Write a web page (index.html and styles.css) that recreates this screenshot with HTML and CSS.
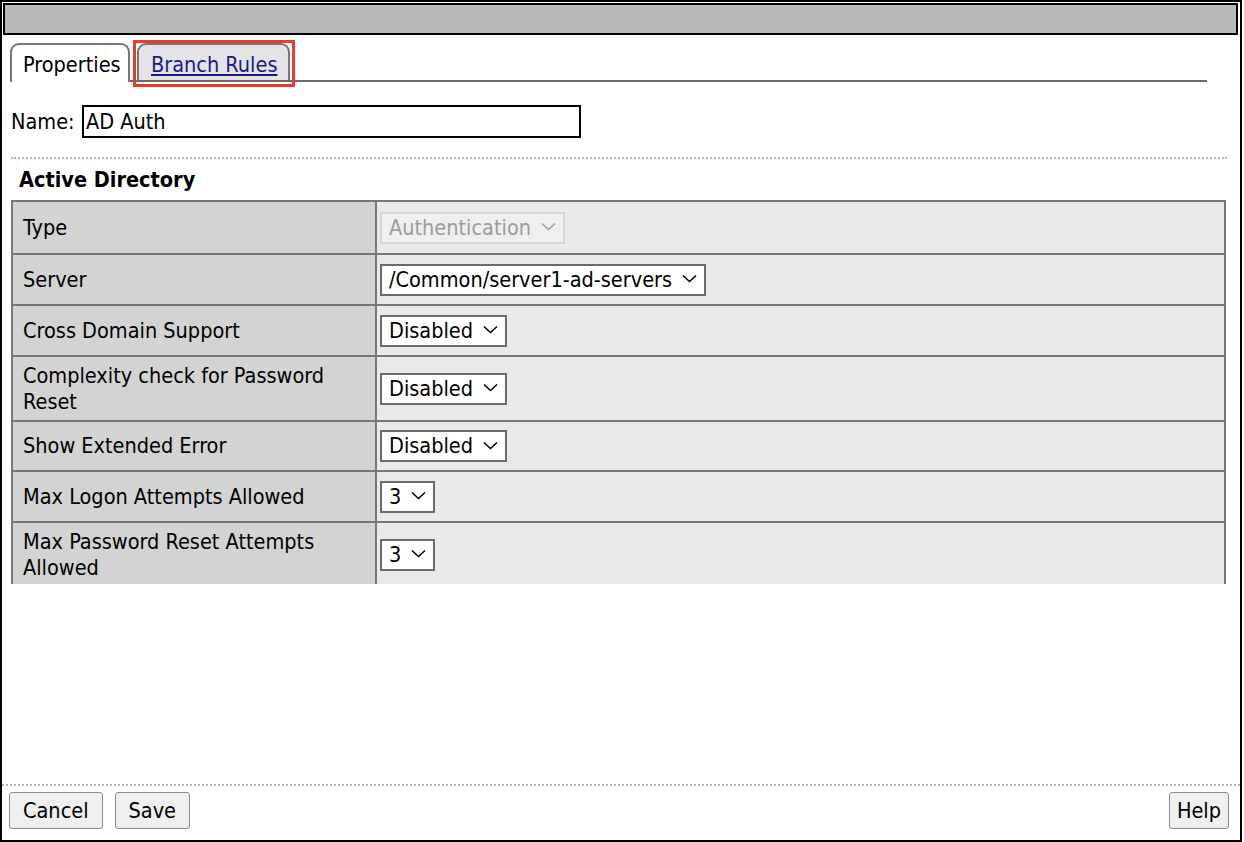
FILE: index.html
```html
<!DOCTYPE html>
<html>
<head>
<meta charset="utf-8">
<link rel="stylesheet" href="styles.css">
</head>
<body>
<div class="window">
  <div class="titlebar"></div>
  <div class="content">
    <div class="tabs">
      <div class="tab active">Properties</div>
      <div class="tab-wrap">
        <div class="tab inactive"><a href="#" class="tab-link">Branch Rules</a></div>
        <div class="highlight"></div>
      </div>
    </div>
    <div class="name-row">
      <span class="name-label">Name:</span>
      <div class="name-input">AD Auth</div>
    </div>
    <div class="dotted"></div>
    <div class="section-title">Active Directory</div>
    <table class="props">
      <tr class="r53">
        <td class="lbl">Type</td>
        <td class="val"><div class="sel disabled">Authentication<svg class="chev" width="15" height="9" viewBox="0 0 15 9"><path d="M1 1.5 L7.5 7.5 L14 1.5" fill="none" stroke="currentColor" stroke-width="1.5"/></svg></div></td>
      </tr>
      <tr class="r51">
        <td class="lbl">Server</td>
        <td class="val"><div class="sel">/Common/server1-ad-servers<svg class="chev" width="15" height="9" viewBox="0 0 15 9"><path d="M1 1.5 L7.5 7.5 L14 1.5" fill="none" stroke="currentColor" stroke-width="1.5"/></svg></div></td>
      </tr>
      <tr class="r51">
        <td class="lbl">Cross Domain Support</td>
        <td class="val"><div class="sel">Disabled<svg class="chev" width="15" height="9" viewBox="0 0 15 9"><path d="M1 1.5 L7.5 7.5 L14 1.5" fill="none" stroke="currentColor" stroke-width="1.5"/></svg></div></td>
      </tr>
      <tr class="r65">
        <td class="lbl">Complexity check for Password Reset</td>
        <td class="val"><div class="sel">Disabled<svg class="chev" width="15" height="9" viewBox="0 0 15 9"><path d="M1 1.5 L7.5 7.5 L14 1.5" fill="none" stroke="currentColor" stroke-width="1.5"/></svg></div></td>
      </tr>
      <tr class="r50">
        <td class="lbl">Show Extended Error</td>
        <td class="val"><div class="sel">Disabled<svg class="chev" width="15" height="9" viewBox="0 0 15 9"><path d="M1 1.5 L7.5 7.5 L14 1.5" fill="none" stroke="currentColor" stroke-width="1.5"/></svg></div></td>
      </tr>
      <tr class="r51">
        <td class="lbl">Max Logon Attempts Allowed</td>
        <td class="val"><div class="sel">3<svg class="chev" width="15" height="9" viewBox="0 0 15 9"><path d="M1 1.5 L7.5 7.5 L14 1.5" fill="none" stroke="currentColor" stroke-width="1.5"/></svg></div></td>
      </tr>
      <tr class="r65">
        <td class="lbl">Max Password Reset Attempts Allowed</td>
        <td class="val"><div class="sel">3<svg class="chev" width="15" height="9" viewBox="0 0 15 9"><path d="M1 1.5 L7.5 7.5 L14 1.5" fill="none" stroke="currentColor" stroke-width="1.5"/></svg></div></td>
      </tr>
    </table>
  </div>
  <div class="spacer"></div>
  <div class="footer">
    <div class="btn-group">
      <button class="btn">Cancel</button>
      <button class="btn">Save</button>
    </div>
    <button class="btn btn-help">Help</button>
  </div>
</div>
</body>
</html>
```

FILE: styles.css
```css
html, body {
  margin: 0;
  padding: 0;
  background: #fff;
}
body {
  font-family: "DejaVu Sans Condensed", "DejaVu Sans", sans-serif;
  font-size: 21.5px;
  color: #000;
}
.window {
  box-sizing: border-box;
  width: 1242px;
  height: 842px;
  border: 2px solid #000;
  padding: 1px;
  display: flex;
  flex-direction: column;
}
.titlebar {
  box-sizing: border-box;
  height: 32px;
  width: 1235px;
  border: 2px solid #000;
  background: #b9b9b9;
  flex: none;
}
.content {
  height: 549px;
  flex: none;
  overflow: hidden;
  padding-top: 8px;
  box-sizing: border-box;
}
.tabs {
  display: flex;
  align-items: flex-end;
  gap: 7px;
  margin-left: 7px;
  width: 1197px;
  height: 37px;
  border-bottom: 2px solid #6a6a6a;
}
.tab {
  box-sizing: border-box;
  height: 39px;
  margin-bottom: -2px;
  border: 2px solid #777;
  border-bottom: none;
  border-radius: 9px 9px 0 0;
  padding: 3px 0 0 11px;
  display: flex;
  align-items: center;
  line-height: 1;
  white-space: nowrap;
}
.tab.active {
  background: #fff;
  width: 120px;
}
.tab.inactive {
  background: #e4e4e4;
  height: 37px;
  margin-bottom: 0;
  width: 153px;
  padding-left: 12px;
  padding-top: 4px;
}
.tab-wrap {
  position: relative;
}
.tab-link {
  color: #1a1a8e;
  text-decoration: underline;
}
.highlight {
  position: absolute;
  left: -4px;
  top: -3px;
  right: -5px;
  bottom: -7px;
  border: 3px solid #f0392b;
}
.name-row {
  display: flex;
  align-items: center;
  margin: 23px 0 0 8px;
  height: 33px;
}
.name-label {
  width: 71px;
}
.name-input {
  box-sizing: border-box;
  width: 499px;
  height: 33px;
  border: 2px solid #000;
  padding-left: 2px;
  display: flex;
  align-items: center;
  background: #fff;
}
.dotted {
  margin: 19px 0 0 8px;
  width: 1216px;
  border-top: 2px dotted #b5b5b5;
}
.section-title {
  font-weight: bold;
  margin: 9px 0 0 16px;
  line-height: 24px;
}
.props {
  margin: 8px 0 0 8px;
  width: 1215px;
  border-collapse: collapse;
  border: 2px solid #777;
}
.props td {
  border: 2px solid #777;
  padding: 0;
  line-height: 26px;
  vertical-align: middle;
}
.props .lbl {
  width: 340px;
  background: #d3d3d3;
  padding: 0 12px 0 10px;
}
.props .val {
  background: #e9e9e9;
  padding-left: 3px;
}
.r53 { height: 53px; }
.r51 { height: 51px; }
.r50 { height: 50px; }
.r65 { height: 65px; }
.sel {
  box-sizing: border-box;
  display: inline-flex;
  align-items: center;
  gap: 10px;
  height: 32px;
  border: 2px solid #6b6b6b;
  background: #fff;
  padding: 0 7px 0 7px;
  line-height: 1;
  color: #000;
}
.sel.disabled {
  border: 2px solid #d4d4d4;
  background: #efefef;
  color: #9c9c9c;
}
.chev {
  display: block;
  margin-top: -2px;
}
.spacer {
  flex: 1;
}
.footer {
  flex: none;
  margin-left: -1px;
  margin-right: -1px;
  border-top: 2px dotted #b5b5b5;
  padding: 6px 11px 10px 7px;
  display: flex;
  justify-content: space-between;
  align-items: center;
}
.btn-group {
  display: flex;
  gap: 12px;
}
.btn {
  font-family: "DejaVu Sans Condensed", "DejaVu Sans", sans-serif;
  font-size: 21.5px;
  height: 37px;
  background: #efefef;
  border: 1px solid #8a8a8a;
  border-radius: 3px;
  padding: 0 13px;
  color: #000;
  margin: 0;
}
.btn-help {
  padding: 0 7px;
}
```
